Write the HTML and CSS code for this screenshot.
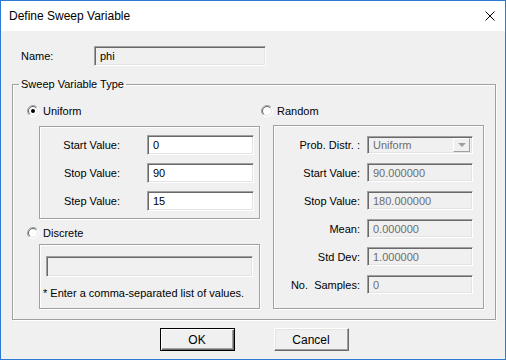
FILE: index.html
```html
<!DOCTYPE html>
<html lang="en">
  <head>
    <meta charset="UTF-8" />
    <meta name="viewport" content="width=device-width, initial-scale=1.0" />
    <title>Define Sweep Variable</title>
    <link rel="stylesheet" href="styles.css">
  </head>
  <body>
    <div class="window">
      <div class="titlebar">
        <span class="title">Define Sweep Variable</span>
        <svg class="close" width="10" height="10" viewBox="0 0 10 10">
          <path d="M0.5 0.5 L9.5 9.5 M9.5 0.5 L0.5 9.5" stroke="#000" stroke-width="1" fill="none" />
        </svg>
      </div>

      <div class="content">
        <div class="name-row">
          <span class="name-label">Name:</span>
          <input class="field readonly name-field" type="text" value="phi" readonly />
        </div>

        <fieldset class="group">
          <legend>Sweep Variable Type</legend>
          <div class="columns">
            <div class="col">
              <div class="radio">
                <svg width="12" height="12" viewBox="0 0 12 12">
                  <circle cx="6" cy="6" r="5.5" fill="#fff" stroke="#fff" />
                  <circle cx="6" cy="6" r="4.5" fill="#fff" stroke="#e3e3e3" />
                  <path d="M2.1 9.9 A5.5 5.5 0 0 1 9.9 2.1" stroke="#a0a0a0" fill="none" />
                  <path d="M2.8 9.2 A4.5 4.5 0 0 1 9.2 2.8" stroke="#696969" fill="none" />
                  <circle cx="6" cy="6" r="2" fill="#000" />
                </svg>
                <span>Uniform</span>
              </div>
              <div class="box uniform-box">
                <span class="lbl">Start Value:</span>
                <input class="field" type="text" value="0" />
                <span class="lbl">Stop Value:</span>
                <input class="field" type="text" value="90" />
                <span class="lbl">Step Value:</span>
                <input class="field" type="text" value="15" />
              </div>

              <div class="radio discrete-radio">
                <svg width="12" height="12" viewBox="0 0 12 12">
                  <circle cx="6" cy="6" r="5.5" fill="#fff" stroke="#fff" />
                  <circle cx="6" cy="6" r="4.5" fill="#fff" stroke="#e3e3e3" />
                  <path d="M2.1 9.9 A5.5 5.5 0 0 1 9.9 2.1" stroke="#a0a0a0" fill="none" />
                  <path d="M2.8 9.2 A4.5 4.5 0 0 1 9.2 2.8" stroke="#696969" fill="none" />
                </svg>
                <span>Discrete</span>
              </div>
              <div class="box discrete-box">
                <input class="field readonly list-field" type="text" value="" readonly />
                <p class="note">* Enter a comma-separated list of values.</p>
              </div>
            </div>

            <div class="col">
              <div class="radio">
                <svg width="12" height="12" viewBox="0 0 12 12">
                  <circle cx="6" cy="6" r="5.5" fill="#fff" stroke="#fff" />
                  <circle cx="6" cy="6" r="4.5" fill="#fff" stroke="#e3e3e3" />
                  <path d="M2.1 9.9 A5.5 5.5 0 0 1 9.9 2.1" stroke="#a0a0a0" fill="none" />
                  <path d="M2.8 9.2 A4.5 4.5 0 0 1 9.2 2.8" stroke="#696969" fill="none" />
                </svg>
                <span>Random</span>
              </div>
              <div class="box random-box">
                <span class="lbl">Prob. Distr. :</span>
                <div class="field readonly disabled select">
                  <span>Uniform</span>
                  <span class="arrow-btn"><span class="arrow"></span></span>
                </div>
                <span class="lbl">Start Value:</span>
                <input class="field readonly disabled" type="text" value="90.000000" readonly />
                <span class="lbl">Stop Value:</span>
                <input class="field readonly disabled" type="text" value="180.000000" readonly />
                <span class="lbl">Mean:</span>
                <input class="field readonly disabled" type="text" value="0.000000" readonly />
                <span class="lbl">Std Dev:</span>
                <input class="field readonly disabled" type="text" value="1.000000" readonly />
                <span class="lbl">No.&nbsp; Samples:</span>
                <input class="field readonly disabled" type="text" value="0" readonly />
              </div>
            </div>
          </div>
        </fieldset>

        <div class="buttons">
          <button class="btn default">OK</button>
          <button class="btn">Cancel</button>
        </div>
      </div>
    </div>
  </body>
</html>
```

FILE: styles.css
```css
* {
  padding: 0px;
  margin: 0px;
  box-sizing: border-box;
}

body {
  font-family: "Liberation Sans", Arial, sans-serif;
  font-size: 11px;
  color: #000;
  background: #fff;
}

.window {
  width: 506px;
  height: 360px;
  border: 1px solid #2b7bd5;
  display: flex;
  flex-direction: column;
}

.titlebar {
  height: 30px;
  background: #fff;
  display: flex;
  align-items: center;
  justify-content: space-between;
  padding: 0 10px 0 8px;
}
.title {
  font-size: 12px;
}
.close {
  display: block;
}

.content {
  flex: 1;
  background: #f0f0f0;
  padding: 15px 9px 0 11px;
}

/* sunken edit box */
.field {
  height: 20px;
  width: 100%;
  font-family: inherit;
  font-size: 11px;
  color: #000;
  background: #fff;
  border: 1px solid;
  border-color: #a0a0a0 #fff #fff #a0a0a0;
  box-shadow: inset 1px 1px 0 #696969, inset -1px -1px 0 #e3e3e3;
  padding: 0 4px 0 5px;
  outline: none;
}
.readonly {
  background: #f0f0f0;
}
.disabled {
  color: #6d6d6d;
}

.name-row {
  display: flex;
  align-items: center;
  height: 20px;
  padding-left: 9px;
}
.name-label {
  width: 73px;
  flex: none;
}
.name-row .name-field {
  width: 172px;
  flex: none;
}

.group {
  margin-top: 11px;
  border: 1px solid #a0a0a0;
  box-shadow: inset 1px 1px 0 #fff, 1px 1px 0 #fff;
  padding: 12px 11px 10px 6px;
}
.group legend {
  padding: 0 2px;
  line-height: 14px;
}

.columns {
  display: grid;
  grid-template-columns: 234px 223px;
  padding-left: 8px;
}

.radio {
  height: 16px;
  display: flex;
  align-items: center;
  gap: 4px;
}
.radio svg {
  display: block;
}

/* etched frame */
.box {
  margin-left: 12px;
  border: 1px solid #a0a0a0;
  box-shadow: inset 1px 1px 0 #fff, 1px 1px 0 #fff;
}

.lbl {
  text-align: right;
  align-self: center;
  white-space: nowrap;
}

.uniform-box {
  width: 221px;
  margin-top: 7px;
  display: grid;
  grid-template-columns: 80px 107px;
  column-gap: 27px;
  row-gap: 8px;
  padding: 8px 5px 7px 0;
}

.discrete-radio {
  margin-top: 6px;
}
.discrete-box {
  width: 221px;
  margin-top: 3px;
  padding: 11px 6px 8px 3px;
}
.list-field {
  height: 21px;
  width: 207px;
  margin-left: 3px;
  display: block;
}
.note {
  margin-top: 9px;
  line-height: 14px;
}

.random-box {
  width: 211px;
  margin-top: 6px;
  display: grid;
  grid-template-columns: 1fr 106px;
  column-gap: 7px;
  row-gap: 9px;
  padding: 10px 10px 14px 0;
}
.random-box .field {
  height: 19px;
}
.random-box .select {
  height: 18px;
  display: flex;
  align-items: center;
  justify-content: space-between;
  padding-right: 2px;
}
.arrow-btn {
  width: 17px;
  height: 14px;
  border: 1px solid;
  border-color: #fff #a0a0a0 #a0a0a0 #fff;
  background: #f0f0f0;
  display: flex;
  align-items: center;
  justify-content: center;
}
.arrow {
  width: 0;
  height: 0;
  border-left: 4px solid transparent;
  border-right: 4px solid transparent;
  border-top: 4px solid #a0a0a0;
}

.buttons {
  margin-top: 8px;
  display: flex;
  justify-content: center;
  gap: 39px;
}
.btn {
  width: 75px;
  height: 23px;
  font-family: inherit;
  font-size: 12px;
  color: #000;
  background: #f0f0f0;
  border: 1px solid;
  border-color: #fff #696969 #696969 #fff;
  box-shadow: inset -1px -1px 0 #a0a0a0, inset 1px 1px 0 #e3e3e3;
  cursor: pointer;
}
.btn.default {
  border-color: #000;
  box-shadow: inset 1px 1px 0 #fff, inset -1px -1px 0 #696969, inset -2px -2px 0 #a0a0a0;
}
```
